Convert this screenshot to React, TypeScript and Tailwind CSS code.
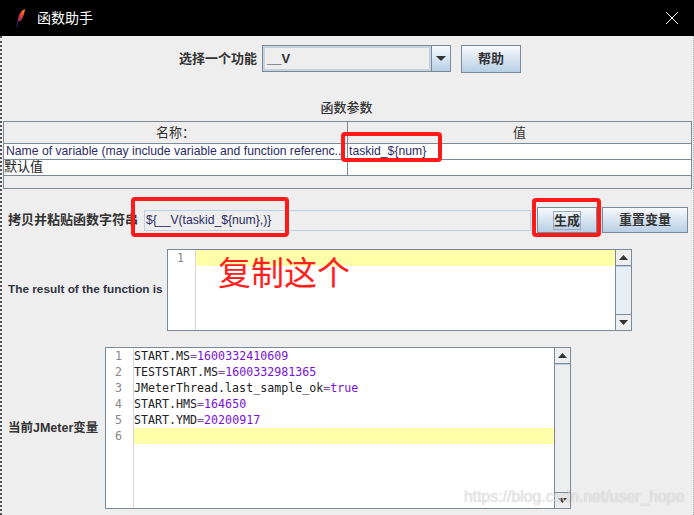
const cjk = `"Liberation Sans","Noto Sans CJK SC",sans-serif`;

function Feather() {
  return (
    <svg width="12" height="20" viewBox="0 0 12 20" className="shrink-0">
      <defs>
        <linearGradient id="f" x1="1" y1="0" x2="0" y2="1">
          <stop offset="0" stopColor="#f9a01b" />
          <stop offset="0.45" stopColor="#e8452a" />
          <stop offset="1" stopColor="#7a1f7c" />
        </linearGradient>
      </defs>
      <path d="M10 1 C7 2 4.5 5 3.5 8.5 L2.5 13.5 L5.5 13 C8 10 9.5 5.5 10 1Z" fill="url(#f)" />
      <path d="M3 13 L1.8 19" stroke="#5b2a86" strokeWidth="0.8" />
    </svg>
  );
}

function Arrow({ down, w = 10 }: { down?: boolean; w?: number }) {
  return (
    <svg width={w} height="5" viewBox="0 0 10 5" preserveAspectRatio="none">
      <path d={down ? "M0 0H10L5 5Z" : "M0 5H10L5 0Z"} fill="#333" />
    </svg>
  );
}

function JButton({ label, className = "", focus }: { label: string; className?: string; focus?: boolean }) {
  return (
    <div
      className={`flex items-center justify-center border border-[#7a8a99] bg-linear-to-b from-[#f8fafc] to-[#b8cfe5] text-[13px] font-bold text-[#333] ${className}`}
    >
      <span className={focus ? "border border-[#9aaabb] leading-[17px]" : ""}>{label}</span>
    </div>
  );
}

function Scrollbar({ thumb, className = "" }: { thumb: string; className?: string }) {
  return (
    <div className={`flex w-[16px] shrink-0 flex-col border-l border-[#7a8a99] bg-[#eeeeee] ${className}`}>
      <div className="flex h-[16px] shrink-0 items-center justify-center border-b border-[#7a8a99]">
        <Arrow w={9} />
      </div>
      <div className={`flex-1 border-t border-[#b8cfe5] ${thumb}`} />
      <div className="flex h-[16px] shrink-0 items-center justify-center border-t border-[#7a8a99]">
        <Arrow down w={9} />
      </div>
    </div>
  );
}

const lines: [string, string][] = [
  ["START.MS", "1600332410609"],
  ["TESTSTART.MS", "1600332981365"],
  ["JMeterThread.last_sample_ok", "true"],
  ["START.HMS", "164650"],
  ["START.YMD", "20200917"],
];

export default function App() {
  return (
    <div
      className="relative h-[515px] w-[694px] overflow-hidden bg-[#eeeeee] text-[#333]"
      style={{ fontFamily: cjk }}
    >
      <div className="flex h-[36px] items-center bg-black pl-[15px] pr-[15px] text-white">
        <Feather />
        <span className="ml-[10px] text-[14px]">函数助手</span>
        <svg width="14" height="14" viewBox="0 0 14 14" className="ml-auto">
          <path d="M1 1L13 13M13 1L1 13" stroke="#fff" strokeWidth="1" />
        </svg>
      </div>

      <div className="flow-root h-[479px] border-l-2 border-r border-dotted border-l-[#555] border-r-[#aaa]">
        <div className="mt-[9px] flex h-[27px] items-center pl-[177px]">
          <span className="w-[83px] text-[13px] font-bold">选择一个功能</span>
          <div className="flex h-[27px] w-[189px] border border-[#7a8a99]">
            <div className="flex-1 border-2 border-[#c5d3e0] bg-[#eeeeee] pl-[2px] text-[13px] font-bold leading-[21px]">
              __V
            </div>
            <div className="flex w-[19px] items-center justify-center border-l border-[#7a8a99] bg-linear-to-b from-[#f8fafc] to-[#b8cfe5]">
              <Arrow down />
            </div>
          </div>
          <JButton label="帮助" className="ml-[10px] h-[28px] w-[60px]" />
        </div>

        <div className="mt-[28px] flex h-[14px] items-center justify-center pr-[2px] text-[13px] font-medium leading-none">
          函数参数
        </div>

        <div className="ml-[1px] mr-[1px] mt-[7px] flex h-[68px] flex-col border border-[#7a8a99] text-[12px]">
          <div className="flex h-[22px] shrink-0 border-b border-[#7a8a99]">
            <div className="flex w-[344px] items-center justify-center border-r border-[#7a8a99] text-[13px]">
              名称：
            </div>
            <div className="flex flex-1 items-center justify-center text-[13px]">值</div>
          </div>
          <div className="flex h-[16px] shrink-0 border-b border-[#7a8a99] bg-white text-[#2b2b66]">
            <div className="w-[344px] overflow-hidden whitespace-nowrap border-r border-[#7a8a99] pl-[2px] text-[12.2px] leading-[14px]">
              Name of variable (may include variable and function referenc...
            </div>
            <div className="flex-1 pl-[1px] text-[12.2px] leading-[14px]">taskid_${"{num}"}</div>
          </div>
          <div className="flex h-[16px] shrink-0 border-b border-[#7a8a99] bg-white text-[#222]">
            <div className="w-[344px] border-r border-[#7a8a99] text-[13px] leading-[14px]">默认值</div>
            <div className="flex-1" />
          </div>
        </div>

        <div className="mt-[18px] flex h-[26px] items-center pl-[6px]">
          <span className="w-[136px] whitespace-nowrap text-[13px] font-bold">拷贝并粘贴函数字符串</span>
          <div className="flex h-[21px] w-[387px] items-center border border-[#b8cfe5] pl-[1px] text-[12.2px] text-[#2b2b66]">
            ${"{__V(taskid_${num},)}"}
          </div>
          <JButton label="生成" focus className="ml-[6px] h-[26px] w-[60px]" />
          <JButton label="重置变量" className="ml-[5px] h-[26px] w-[86px]" />
        </div>

        <div className="mt-[16px] flex h-[82px] items-center pl-[6px]">
          <span className="w-[159px] whitespace-nowrap text-[11.8px] font-bold text-[#2e3440]">The result of the function is</span>
          <div className="flex h-[82px] w-[465px] border border-[#7a8a99] bg-white">
            <div className="w-[28px] shrink-0 border-r border-[#d6d6d6] pr-[11px] text-right text-[11.5px] leading-[16px] text-[#888]" style={{ fontFamily: '"DejaVu Sans Mono",monospace' }}>
              1
            </div>
            <div className="flex-1">
              <div className="h-[16px] bg-[#ffffaa]" />
            </div>
            <Scrollbar thumb="bg-[#e6eef6]" />
          </div>
        </div>

        <div className="mt-[16px] flex h-[162px] items-center pl-[6px]">
          <span className="w-[97px] whitespace-nowrap text-[12.5px] font-bold">当前JMeter变量</span>
          <div
            className="flex h-[162px] w-[466px] border border-[#7a8a99] bg-white text-[11.65px] leading-[16px]"
            style={{ fontFamily: '"DejaVu Sans Mono",monospace' }}
          >
            <div className="w-[28px] shrink-0 border-r border-[#d6d6d6] pr-[11px] text-right text-[#888]">
              {[1, 2, 3, 4, 5, 6].map((n) => (
                <div key={n}>{n}</div>
              ))}
            </div>
            <div className="flex-1 whitespace-nowrap">
              {lines.map(([k, v]) => (
                <div key={k} className="h-[16px] text-[#222]">
                  {k}
                  <span className="text-[#7d4a8c]">=</span>
                  <span className="text-[#7a10d8]">{v}</span>
                </div>
              ))}
              <div className="h-[16px] bg-[#ffffaa]" />
            </div>
            <Scrollbar thumb="" />
          </div>
        </div>
      </div>

      <div className="absolute left-[341px] top-[132px] h-[30px] w-[101px] rounded-[4px] border-[4px] border-[#ff1a1a]" />
      <div className="absolute left-[131px] top-[197px] h-[40px] w-[158px] rounded-[4px] border-[4px] border-[#ff1a1a]" />
      <div className="absolute left-[532px] top-[198px] h-[39px] w-[69px] rounded-[4px] border-[4px] border-[#ff1a1a]" />
      <div className="absolute left-[218px] top-[249px] text-[33px] font-normal leading-[44px] text-[#ff2020]" style={{ fontFamily: '"Noto Sans CJK SC",sans-serif' }}>
        复制这个
      </div>
      <div
        className="absolute left-[464px] top-[487px] text-[15.8px] leading-[20px] text-white/60 [text-shadow:0_0_1px_rgba(120,120,120,0.5)]"
        style={{ fontFamily: '"Liberation Sans",sans-serif' }}
      >
        https://blog.csdn.net/user_hope
      </div>
    </div>
  );
}
